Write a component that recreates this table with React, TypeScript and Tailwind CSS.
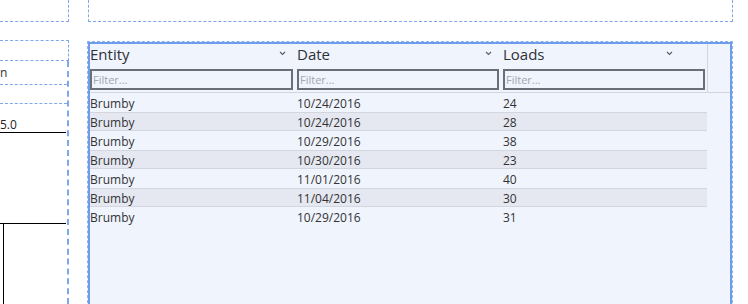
import { ReactNode } from "react";

const rows = [
  ["Brumby", "10/24/2016", "24"],
  ["Brumby", "10/24/2016", "28"],
  ["Brumby", "10/29/2016", "38"],
  ["Brumby", "10/30/2016", "23"],
  ["Brumby", "11/01/2016", "40"],
  ["Brumby", "11/04/2016", "30"],
  ["Brumby", "10/29/2016", "31"],
];

const columns = [
  { title: "Entity", width: "w-[207px]", pad: "pr-[11px]", input: "w-[203px]" },
  { title: "Date", width: "w-[206px]", pad: "pr-[11px]", input: "w-[202px]" },
  { title: "Loads", width: "w-[204px]", pad: "pr-[34px]", input: "w-[202px]" },
];

function Chevron() {
  return (
    <svg width="7" height="5" viewBox="0 0 7 5" className="mt-[7px] text-[#5a5d66]">
      <path d="M1 1l2.5 2.5L6 1" fill="none" stroke="currentColor" strokeWidth="1.1" />
    </svg>
  );
}

function HeaderCell({ title, width, pad, input }: (typeof columns)[number]) {
  return (
    <div className={`${width} flex flex-col`}>
      <div className={`flex h-[22px] items-start justify-between ${pad}`}>
        <span className="text-[15px] leading-[20px] text-[#2f3136]">{title}</span>
        <Chevron />
      </div>
      <input
        placeholder="Filter..."
        className={`${input} mt-[3px] h-[21px] border-2 border-[#6a6e77] bg-transparent px-[1px] text-[11px] outline-none placeholder:text-[#a3a6ad]`}
      />
    </div>
  );
}

function Cell({ children, width }: { children: ReactNode; width: string }) {
  return <div className={`${width} relative top-[1px] truncate`}>{children}</div>;
}

export default function App() {
  return (
    <div className="flex h-[304px] w-[748px] overflow-hidden bg-white font-['Open_Sans',sans-serif] text-[#333]">
      {/* left designer strip */}
      <div className="flex w-[69px] shrink-0 flex-col">
        <div className="h-[22px] shrink-0 border-r border-b border-dashed border-[#7fa6ee]" />
        <div className="mt-[18px] h-[21px] shrink-0 border-y border-r border-dashed border-[#7fa6ee]" />
        <div className="flex flex-1 flex-col border-r-2 border-dashed border-[#7fa6ee]">
          <div className="flex h-[24px] shrink-0 items-center overflow-hidden border-b border-dashed border-[#7fa6ee] text-[12px]">
            <span>n</span>
          </div>
          <div className="h-[19px] shrink-0 border-b border-dashed border-[#7fa6ee]" />
          <div className="mt-[13px] mr-[1px] border-b border-black text-[12px] leading-[15px] text-[#222]">5.0</div>
          <div className="h-[90px] shrink-0" />
          <div className="mr-[1px] flex-1 border-t border-black">
            <div className="ml-[3px] h-full border-l border-black" />
          </div>
        </div>
      </div>

      {/* table visual */}
      <div className="ml-[19px] flex w-[645px] shrink-0 flex-col">
        <div className="h-[22px] shrink-0 border-x border-b border-dashed border-[#7fa6ee]" />
        <div className="mt-[20px] h-[300px] w-[644px] shrink-0 border-2 border-[#6d9cec] bg-[#f0f4fd] outline-1 outline-dashed outline-[#8db1f1]">
          <div className="flex border-b border-[#d2d6de]">
            <div className="flex w-[617px] pb-[2px]">
              {columns.map((c) => (
                <HeaderCell key={c.title} {...c} />
              ))}
            </div>
            <div className="w-[23px] border-l border-[#d2d6de]" />
          </div>
          <div className="flex w-[617px] flex-col text-[12px] leading-[17px] text-[#333]">
            {rows.map((r, i) => (
              <div
                key={i}
                className={`flex h-[19px] items-center ${i % 2 === 1 ? "border-y border-[#d3d6de] bg-[#e5e8f1]" : ""}`}
              >
                <Cell width="w-[207px]">{r[0]}</Cell>
                <Cell width="w-[206px]">{r[1]}</Cell>
                <Cell width="w-[204px]">{r[2]}</Cell>
              </div>
            ))}
          </div>
        </div>
      </div>
    </div>
  );
}
